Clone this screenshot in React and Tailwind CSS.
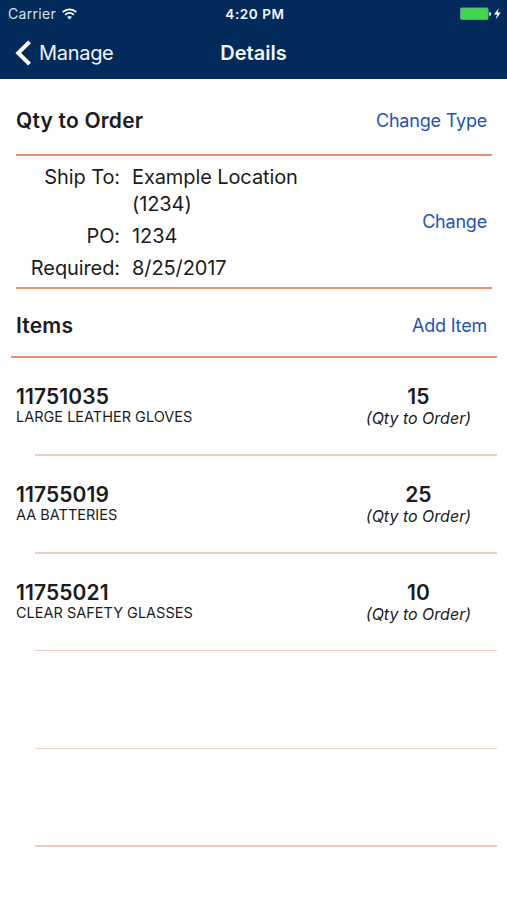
import React from 'react';

const items = [
  { id: '11751035', name: 'LARGE LEATHER GLOVES', qty: 15 },
  { id: '11755019', name: 'AA BATTERIES', qty: 25 },
  { id: '11755021', name: 'CLEAR SAFETY GLASSES', qty: 10 },
];

const WifiIcon = () => (
  <svg width="15" height="12" viewBox="0 0 15 12" fill="none" stroke="#f4f8ff" strokeWidth="1.7">
    <path d="M0.7 4.2a9.6 9.6 0 0 1 13.6 0" />
    <path d="M3.1 6.8a6.2 6.2 0 0 1 8.8 0" />
    <path d="M7.5 11.6L5.1 9.1a3.4 3.4 0 0 1 4.8 0z" fill="#f4f8ff" stroke="none" />
  </svg>
);

const BatteryIcon = () => (
  <svg width="42" height="14" viewBox="0 0 42 14">
    <rect x="0.5" y="0.9" width="27.6" height="11.6" rx="1.2" fill="#41d650" stroke="#6f9d8e" strokeWidth="0.8" />
    <path d="M29.2 4.9a2 2 0 0 1 0 4z" fill="#dce8f5" />
    <path d="M38.8 1.2L34 7.6h3.2L35.6 12.6l5.2-7h-3.2z" fill="#fff" />
  </svg>
);

/* Navy header: status bar plus navigation bar */
const Header = () => (
  <header className="h-[79px] bg-[#022b5c] text-[#f1f6ff]">
    <div className="grid h-[27px] grid-cols-3 items-center pl-[8px] pr-[5px]">
      <div className="flex items-center gap-[6px]">
        <span className="pt-px text-[14px] leading-none tracking-[0.3px] text-[#d5e1f1]">Carrier</span>
        <WifiIcon />
      </div>
      <span className="pt-[2px] text-center text-[13.5px] font-semibold leading-none tracking-[0.6px]">4:20 PM</span>
      <div className="flex justify-end">
        <BatteryIcon />
      </div>
    </div>
    <div className="grid h-[52px] grid-cols-3 items-center pl-[15px] pr-[15px]">
      <button className="flex items-center gap-[7px]">
        <svg width="17" height="26" viewBox="0 0 17 26" fill="none" stroke="#fff" strokeWidth="4">
          <path d="M14.5 1.8L3.2 13l11.3 11.2" />
        </svg>
        <span className="text-[20px] leading-none tracking-[-0.3px]">Manage</span>
      </button>
      <h1 className="text-center text-[20px] font-semibold leading-none">Details</h1>
    </div>
  </header>
);

const SectionTitle = ({ title, action }) => (
  <div className="flex items-center justify-between">
    <h2 className="text-[21px] font-semibold leading-none tracking-[0.2px]">{title}</h2>
    <button className="pt-[2px] text-[18px] leading-none tracking-[-0.2px] text-[#2453b3]">{action}</button>
  </div>
);

const Field = ({ label, children }) => (
  <div className="flex gap-3 leading-[27px]">
    <dt className="w-[104px] text-right">{label}:</dt>
    <dd className="w-[180px]">{children}</dd>
  </div>
);

const ItemRow = ({ item }) => (
  <li className="flex h-[97.8px] flex-col justify-between">
    <div className="flex justify-between pl-4 pr-9 pt-[28px]">
      <div>
        <p className="text-[21px] font-semibold leading-[22px] tracking-[0.1px]">{item?.id}</p>
        <p className="text-[14.5px] leading-[18px]">{item?.name}</p>
      </div>
      {item && (
        <div className="text-center">
          <p className="text-[21px] font-semibold leading-[22px] tracking-[0.1px]">{item.qty}</p>
          <p className="text-[16px] italic leading-[21px]">(Qty to Order)</p>
        </div>
      )}
    </div>
    <div className="ml-[35px] mr-[10px] h-[1.5px] bg-[#f3cbc2]" />
  </li>
);

const App = () => {
  // Unused slots keep their separators below the last item
  const rows = [...items, null, null];

  return (
    <div className="h-[900px] w-[507px] overflow-hidden bg-white font-['Inter',sans-serif] text-[#1c1c1c]">
      <Header />

      <section className="ml-4 mr-[15px]">
        <div className="flex h-[75px] flex-col justify-center pr-[5px] pt-[7px]">
          <SectionTitle title="Qty to Order" action="Change Type" />
        </div>
        <div className="flex h-[135px] items-center justify-between border-y-2 border-[#e58f75] pr-[5px]">
          <dl className="flex flex-col gap-[5px] pt-[2px] text-[20px] tracking-[-0.1px]">
            <Field label="Ship To">Example Location (1234)</Field>
            <Field label="PO">1234</Field>
            <Field label="Required">8/25/2017</Field>
          </dl>
          <button className="text-[18px] leading-none tracking-[-0.2px] text-[#2453b3]">Change</button>
        </div>
      </section>

      <section>
        <div className="ml-[11px] mr-[10px] flex h-[69px] flex-col justify-center border-b-2 border-[#e58f75] pl-[5px] pr-[10px] pt-[5px]">
          <SectionTitle title="Items" action="Add Item" />
        </div>
        <ul>
          {rows.map((item, index) => (
            <ItemRow key={index} item={item} />
          ))}
        </ul>
      </section>
    </div>
  );
};

export default App;
